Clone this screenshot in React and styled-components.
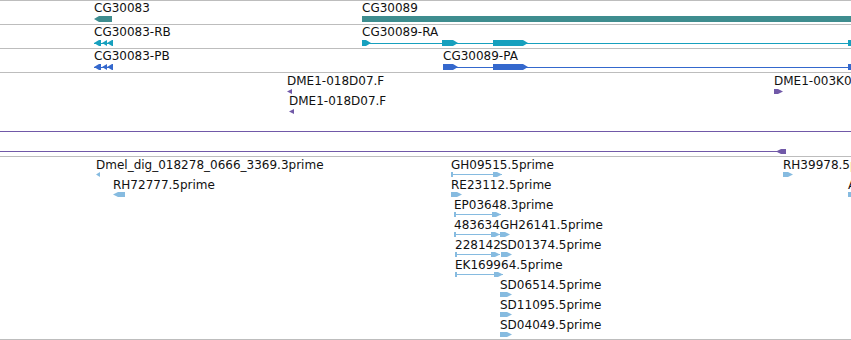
import styled, { createGlobalStyle } from "styled-components";

const GlobalStyle = createGlobalStyle`
  body {
    margin: 0;
    background: #ffffff;
    overflow: hidden;
    font-family: "DejaVu Sans", "Liberation Sans", sans-serif;
  }
`;

const COLORS = {
  gene: "#3e8d8f",
  mrna: "#17a0be",
  cds: "#3468cd",
  clone: "#7159a8",
  est: "#86bbe0",
};

// tracks stacked top to bottom; features sit at their genomic x on each track
const tracks = [
  {
    height: 23,
    color: COLORS.gene,
    glyph: 6,
    labels: [
      { text: "CG30083", x: 94, y: 0 },
      { text: "CG30089", x: 362, y: 0 },
    ],
    features: [
      { x: 94, y: 15, w: 18, exons: [[0, 18, "l"]] },
      { x: 362, y: 15, w: 489, exons: [[0, 489]] },
    ],
  },
  {
    height: 23,
    color: COLORS.mrna,
    glyph: 6,
    labels: [
      { text: "CG30083-RB", x: 94, y: 0 },
      { text: "CG30089-RA", x: 362, y: 0 },
    ],
    features: [
      { x: 94, y: 15, w: 19, line: true, exons: [[0, 7, "l"], [8, 13, "l"], [13, 19, "l"]] },
      { x: 362, y: 15, w: 489, line: true, exons: [[0, 9, "r"], [80, 96, "r"], [131, 166, "r"], [486, 489]] },
    ],
  },
  {
    height: 23,
    color: COLORS.cds,
    glyph: 6,
    labels: [
      { text: "CG30083-PB", x: 94, y: 0 },
      { text: "CG30089-PA", x: 443, y: 0 },
    ],
    features: [
      { x: 94, y: 15, w: 19, line: true, exons: [[0, 7, "l"], [8, 13, "l"], [13, 19, "l"]] },
      { x: 443, y: 15, w: 408, line: true, exons: [[0, 15, "r"], [50, 85, "r"], [405, 408]] },
    ],
  },
  {
    height: 83,
    color: COLORS.clone,
    glyph: 5,
    labels: [
      { text: "DME1-018D07.F", x: 287, y: 1 },
      { text: "DME1-018D07.F", x: 289, y: 21 },
      { text: "DME1-003K0", x: 774, y: 1 },
    ],
    features: [
      { x: 287, y: 16, w: 5, exons: [[0, 5, "l"]] },
      { x: 289, y: 36, w: 5, exons: [[0, 5, "l"]] },
      { x: 774, y: 16, w: 9, exons: [[0, 9, "r"]] },
      { x: 0, y: 56, w: 851, line: true, exons: [] },
      { x: 0, y: 76, w: 786, line: true, exons: [[776, 786, "l"]] },
    ],
  },
  {
    height: 182,
    color: COLORS.est,
    glyph: 5,
    labels: [
      { text: "Dmel_dig_018278_0666_3369.3prime", x: 96, y: 1 },
      { text: "GH09515.5prime", x: 451, y: 1 },
      { text: "RH39978.5prime", x: 783, y: 1 },
      { text: "RH72777.5prime", x: 113, y: 21 },
      { text: "RE23112.5prime", x: 451, y: 21 },
      { text: "A", x: 848, y: 21 },
      { text: "EP03648.3prime", x: 454, y: 41 },
      { text: "483634", x: 454, y: 61 },
      { text: "GH26141.5prime", x: 500, y: 61 },
      { text: "228142", x: 455, y: 81 },
      { text: "SD01374.5prime", x: 500, y: 81 },
      { text: "EK169964.5prime", x: 455, y: 101 },
      { text: "SD06514.5prime", x: 500, y: 121 },
      { text: "SD11095.5prime", x: 500, y: 141 },
      { text: "SD04049.5prime", x: 500, y: 161 },
    ],
    features: [
      { x: 96, y: 15, w: 4, exons: [[0, 4, "l"]] },
      { x: 451, y: 15, w: 51, line: true, exons: [[0, 2], [42, 51, "r"]] },
      { x: 783, y: 15, w: 10, exons: [[0, 10, "r"]] },
      { x: 113, y: 35, w: 12, exons: [[0, 12, "l"]] },
      { x: 451, y: 35, w: 11, exons: [[0, 11, "r"]] },
      { x: 848, y: 35, w: 10, exons: [[0, 10, "r"]] },
      { x: 454, y: 55, w: 47, line: true, exons: [[0, 2], [38, 47, "r"]] },
      { x: 454, y: 75, w: 46, line: true, exons: [[0, 2], [37, 46, "r"]] },
      { x: 500, y: 75, w: 10, exons: [[0, 10, "r"]] },
      { x: 455, y: 95, w: 45, line: true, exons: [[0, 2], [36, 45, "r"]] },
      { x: 501, y: 95, w: 11, exons: [[0, 11, "r"]] },
      { x: 455, y: 115, w: 48, line: true, exons: [[0, 2], [39, 48, "r"]] },
      { x: 500, y: 135, w: 12, exons: [[0, 12, "r"]] },
      { x: 500, y: 155, w: 12, exons: [[0, 12, "r"]] },
      { x: 500, y: 175, w: 12, exons: [[0, 12, "r"]] },
    ],
  },
];

function exonPoints(s, e, tip, h) {
  const t = Math.min(5, e - s);
  const m = h / 2;
  if (tip === "r") return `${s},0 ${e - t},0 ${e},${m} ${e - t},${h} ${s},${h}`;
  if (tip === "l") return `${s},${m} ${s + t},0 ${e},0 ${e},${h} ${s + t},${h}`;
  return `${s},0 ${e},0 ${e},${h} ${s},${h}`;
}

function Feature({ f, color, h }) {
  return (
    <Glyph $x={f.x} $y={f.y} width={f.w} height={h} viewBox={`0 0 ${f.w} ${h}`}>
      {f.line && <rect x="0" y={Math.floor(h / 2)} width={f.w} height="1" fill={color} />}
      {f.exons.map(([s, e, tip], i) => (
        <polygon key={i} points={exonPoints(s, e, tip, h)} fill={color} />
      ))}
    </Glyph>
  );
}

export default function App() {
  return (
    <>
      <GlobalStyle />
      <Browser>
        {tracks.map((t, i) => (
          <Track key={i} $height={t.height} $last={i === tracks.length - 1}>
            {t.features.map((f, j) => (
              <Feature key={j} f={f} color={t.color} h={t.glyph} />
            ))}
            {t.labels.map((l, j) => (
              <Label key={j} $x={l.x} $y={l.y}>
                {l.text}
              </Label>
            ))}
          </Track>
        ))}
      </Browser>
    </>
  );
}

const Browser = styled.div`
  width: 851px;
  height: 340px;
  display: flex;
  flex-direction: column;
  overflow: hidden;
`;

const Track = styled.div`
  position: relative;
  flex: none;
  height: ${({ $height }) => $height}px;
  border-top: 1px solid #bdbdbd;
  border-bottom: ${({ $last }) => ($last ? "1px solid #bdbdbd" : "none")};
  overflow: hidden;
`;

const Glyph = styled.svg`
  position: absolute;
  left: ${({ $x }) => $x}px;
  top: ${({ $y }) => $y}px;
  overflow: hidden;
  display: block;
`;

const Label = styled.div`
  position: absolute;
  left: ${({ $x }) => $x}px;
  top: ${({ $y }) => $y}px;
  font-family: "DejaVu Sans", "Liberation Sans", sans-serif;
  font-size: 12px;
  line-height: 14px;
  color: #111111;
  white-space: nowrap;
`;
